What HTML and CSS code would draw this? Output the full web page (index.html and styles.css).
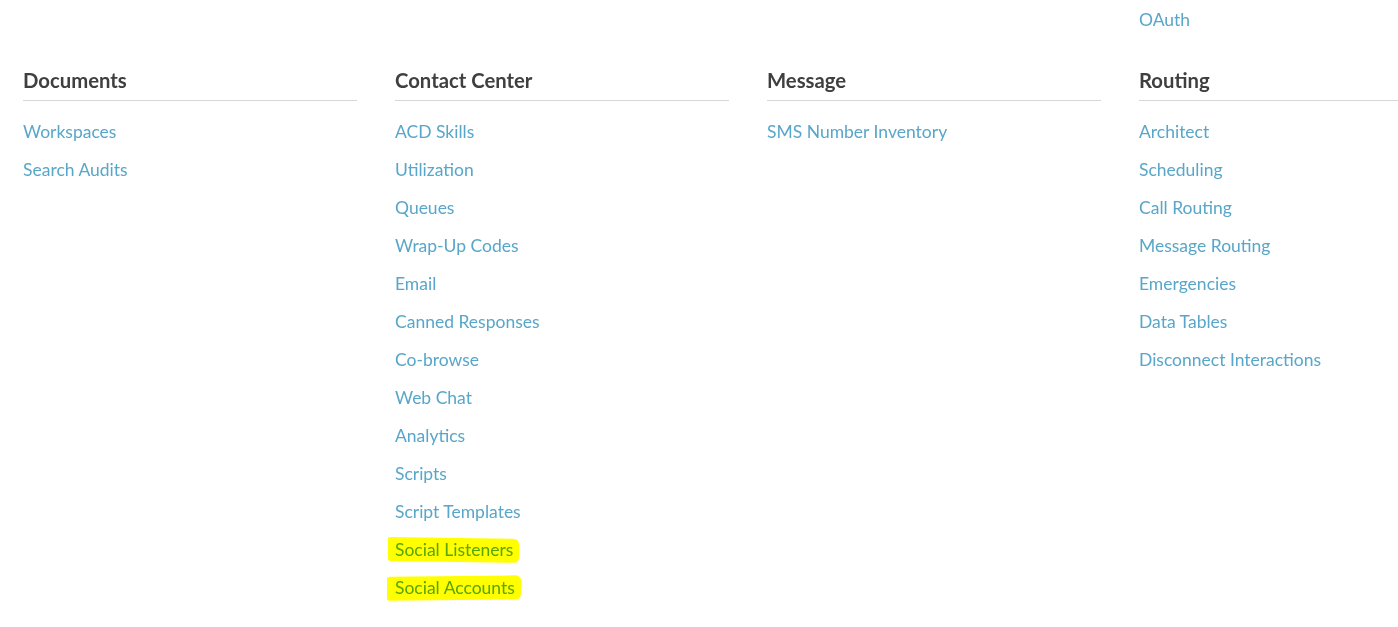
FILE: index.html
```html
<!DOCTYPE html>
<html lang="en">
<head>
<meta charset="utf-8">
<title>Admin menu</title>
<link rel="stylesheet" href="styles.css">
</head>
<body>
<div class="page">
  <div class="grid tail">
    <section class="col"></section>
    <section class="col"></section>
    <section class="col"></section>
    <section class="col">
      <ul class="links"><li><a href="#">OAuth</a></li></ul>
    </section>
  </div>
  <div class="grid">
    <section class="col">
      <h2 class="title">Documents</h2>
      <ul class="links">
        <li><a href="#">Workspaces</a></li>
        <li><a href="#">Search Audits</a></li>
      </ul>
    </section>
    <section class="col">
      <h2 class="title">Contact Center</h2>
      <ul class="links">
        <li><a href="#">ACD Skills</a></li>
        <li><a href="#">Utilization</a></li>
        <li><a href="#">Queues</a></li>
        <li><a href="#">Wrap-Up Codes</a></li>
        <li><a href="#">Email</a></li>
        <li><a href="#">Canned Responses</a></li>
        <li><a href="#">Co-browse</a></li>
        <li><a href="#">Web Chat</a></li>
        <li><a href="#">Analytics</a></li>
        <li><a href="#">Scripts</a></li>
        <li><a href="#">Script Templates</a></li>
        <li><a href="#" class="marked m1">Social Listeners</a></li>
        <li><a href="#" class="marked m2">Social Accounts</a></li>
      </ul>
    </section>
    <section class="col">
      <h2 class="title">Message</h2>
      <ul class="links">
        <li><a href="#">SMS Number Inventory</a></li>
      </ul>
    </section>
    <section class="col">
      <h2 class="title">Routing</h2>
      <ul class="links">
        <li><a href="#">Architect</a></li>
        <li><a href="#">Scheduling</a></li>
        <li><a href="#">Call Routing</a></li>
        <li><a href="#">Message Routing</a></li>
        <li><a href="#">Emergencies</a></li>
        <li><a href="#">Data Tables</a></li>
        <li><a href="#">Disconnect Interactions</a></li>
      </ul>
    </section>
  </div>
</div>
</body>
</html>
```
FILE: styles.css
```css
html, body {
  margin: 0;
  padding: 0;
  background: #ffffff;
  overflow: hidden;
}
body {
  font-family: Lato, "Open Sans", sans-serif;
  width: 1398px;
  height: 627px;
}
.page {
  box-sizing: border-box;
  width: 1398px;
  overflow: hidden;
  padding-left: 23px;
  display: flex;
  flex-direction: column;
  gap: 30px;
}
.grid {
  display: grid;
  grid-template-columns: repeat(4, 334px);
  column-gap: 38px;
}
.title {
  margin: 0;
  font-size: 20.3px;
  font-weight: 700;
  line-height: 24px;
  color: #3f3f3f;
  padding-bottom: 8px;
  border-bottom: 1px solid #d8d8d8;
  margin-bottom: 11px;
}
.links {
  list-style: none;
  margin: 0;
  padding: 0;
}
.links li {
  height: 38px;
  display: flex;
  align-items: center;
}
.links a {
  font-size: 17.5px;
  color: #58a6c9;
  text-decoration: none;
  white-space: nowrap;
}
.marked {
  position: relative;
}
.marked::before {
  content: "";
  position: absolute;
  left: -7px;
  right: -6px;
  top: -1px;
  bottom: -2px;
  background: #ffff00;
  mix-blend-mode: multiply;
  border-radius: 3px 6px 4px 2px / 2px 5px 6px 3px;
}
.m1::before {
  transform: skewY(0.8deg);
}
.m2::before {
  left: -8px;
  transform: skewY(-0.6deg);
}
```
